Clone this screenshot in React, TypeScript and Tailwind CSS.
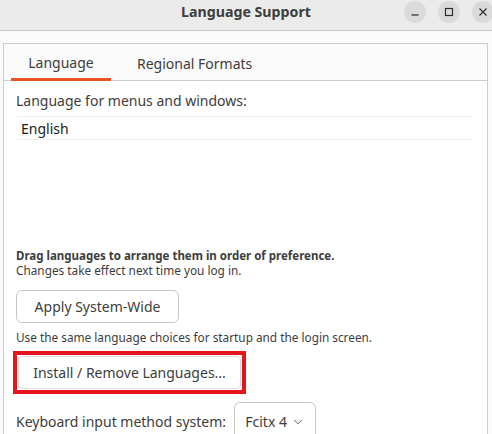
import { ChevronDown } from "lucide-react";

const font = { fontFamily: '"Noto Sans", "DejaVu Sans", sans-serif' };

function WinButton({ children }: { children: React.ReactNode }) {
  return (
    <div className="w-[22px] h-[22px] rounded-full bg-[#dadada] flex items-center justify-center text-[#2e2e2e]">
      {children}
    </div>
  );
}

export default function App() {
  return (
    <div
      className="w-[492px] h-[434px] overflow-hidden bg-[#fafafa] text-[#3d3d3d] flex flex-col"
      style={font}
    >
      {/* header bar */}
      <div className="h-[31px] shrink-0 bg-[#ebebeb] border-b border-[#c9c9c9] relative flex items-center justify-center">
        <span className="text-[14.2px] font-bold leading-none text-[#3d3d3d] -mt-[5px]">Language Support</span>
        <div className="absolute left-[404px] top-[1px] flex gap-[12px]">
          <WinButton>
            <svg width="10" height="10" viewBox="0 0 10 10">
              <path d="M1.5 8h7" stroke="currentColor" strokeWidth="1.2" />
            </svg>
          </WinButton>
          <WinButton>
            <svg width="10" height="10" viewBox="0 0 10 10">
              <rect x="1.5" y="1.5" width="7" height="7" fill="none" stroke="currentColor" strokeWidth="1.2" />
            </svg>
          </WinButton>
          <WinButton>
            <svg width="10" height="10" viewBox="0 0 10 10">
              <path d="M1.5 1.5l7 7M8.5 1.5l-7 7" stroke="currentColor" strokeWidth="1.2" />
            </svg>
          </WinButton>
        </div>
      </div>

      <div className="flex-1 pt-[12px] pl-[3px] pr-[4px]">
        <div className="h-full border border-[#cdcdcd] border-b-0 bg-white flex flex-col">
          {/* tabs */}
          <div className="h-[37px] shrink-0 bg-[#fafafa] border-b border-[#cdcdcd] flex items-end pl-[7px]">
            <div className="w-[100px] h-full flex items-center justify-center border-b-[3px] border-[#e95420] -mb-px text-[14px] pt-[2px]">
              Language
            </div>
            <div className="ml-[26px] h-full flex items-center text-[14px] pt-[2px]">Regional Formats</div>
          </div>

          {/* content */}
          <div className="px-[12px] pt-[11px] flex flex-col">
            <div className="text-[14px] leading-[18px]">Language for menus and windows:</div>
            <div className="mt-[6px] border-t border-b border-[#f0f0f0] h-[24px] ml-[1px] mr-[2px] flex items-center pl-[4px] text-[14px] text-[#1a1a1a]">
              English
            </div>
            <div className="h-[108px]" />
            <div className="text-[11.5px] font-bold leading-[15px]">
              Drag languages to arrange them in order of preference.
            </div>
            <div className="text-[11.8px] leading-[15px]">Changes take effect next time you log in.</div>
            <div className="mt-[12px] w-[163px] h-[33px] border border-[#c7c7c7] rounded-[6px] bg-white flex items-center justify-center text-[14px]">
              Apply System-Wide
            </div>
            <div className="mt-[7px] text-[11.8px] leading-[15px]">
              Use the same language choices for startup and the login screen.
            </div>
            <div className="mt-[6px] -ml-[3px] w-[233px] h-[43px] border-[4px] border-[#e8131f] p-px">
              <div className="h-full border border-[#dcdcdc] rounded-[4px] bg-white flex items-center justify-center text-[14px]">
                Install / Remove Languages...
              </div>
            </div>
            <div className="mt-[8px] flex items-start">
              <div className="text-[14px] mt-[9px]">Keyboard input method system:</div>
              <div className="ml-[8px] w-[82px] h-[40px] border border-[#c7c7c7] rounded-[6px] bg-white flex items-center justify-center gap-[4px] text-[14px] pb-[2px]">
                Fcitx 4
                <ChevronDown size={14} strokeWidth={1.5} className="mt-[2px]" />
              </div>
            </div>
          </div>
        </div>
      </div>
    </div>
  );
}
